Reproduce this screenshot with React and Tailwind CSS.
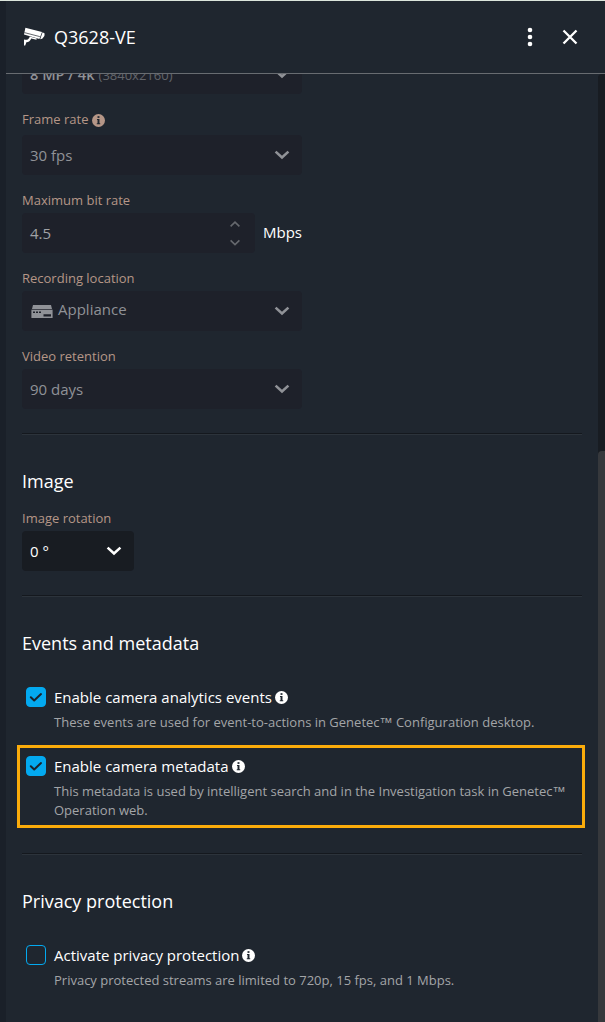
import React, { useState } from "react";

function InfoIcon({ className }) {
  return (
    <svg viewBox="0 0 12 12" className={`w-[13px] h-[13px] shrink-0 ${className}`}>
      <circle cx="6" cy="6" r="6" fill="currentColor" />
      <rect x="5.1" y="2" width="1.8" height="1.6" fill="#1f262f" />
      <path d="M4.6 4.6h2.3v4h.7v.9H4.4v-.9h.7V5.5h-.5z" fill="#1f262f" />
    </svg>
  );
}

function Chevron({ className }) {
  return (
    <svg viewBox="0 0 16 10" className={`w-4 h-2.5 shrink-0 ${className}`} fill="none">
      <path d="M1.6 1.6 8 7.4l6.4-5.8" stroke="currentColor" strokeWidth="2.6" />
    </svg>
  );
}

function CameraIcon() {
  return (
    <svg viewBox="0 0 24 20" className="w-6 h-5 shrink-0" fill="#fff">
      <path d="M3.4.8 20 5l-2.6 7-15.4-4.4z" />
      <path d="M2.4 5.6 17.8 9.6" stroke="#1f262f" strokeWidth=".7" />
      <path d="m20.6 5.2 2 1.4-.2 2.4-2.2 2.8-2 .4z" />
      <path d="M2 12.4c2.8 1 4.8.2 5.8-3l1.6.5 5.4 1.6-.4 1.2-5.2-1.3C8.400 13.600 6.800 15 4.400 15.200L3.200 18.400H2z" />
    </svg>
  );
}

function ApplianceIcon() {
  return (
    <svg viewBox="0 0 22 13" className="w-[22px] h-[13px] ml-px shrink-0">
      <path d="M2 0h18l1 3.900H1z" fill="currentColor" />
      <path d="M.4 4.700h21.200V13H.4z" fill="currentColor" />
      <path d="M2 6.400h2v1.600H2zM5 6.400h2v1.600H5zM8 6.400h2v1.600H8zM12.500 9.300h7.500v2.200h-7.500z" fill="#1e212a" />
    </svg>
  );
}

function Label({ children }) {
  return (
    <div className="flex items-center gap-1 h-[18px] mt-[17px] mb-[3px] text-[13px] text-[#b59687]">
      {children}
    </div>
  );
}

function SelectBox({ children }) {
  return (
    <div className="flex items-center justify-between w-[280px] h-10 pl-2 pr-3 rounded bg-[#1e212a] text-[15px] text-[#909297]">
      <span className="flex items-center">{children}</span>
      <Chevron className="text-[#909297]" />
    </div>
  );
}

function Divider() {
  return <div className="w-[560px] h-0.5 border-t border-t-[#14181e] border-b border-b-[#2c333b]" />;
}

function Heading({ children }) {
  return <h2 className="mt-[34px] h-6 leading-6 text-[18px] text-white">{children}</h2>;
}

function Trademark() {
  return <span className="font-['Liberation_Sans',sans-serif]">™</span>;
}

function CheckOption({ label, checked, onChange, children }) {
  return (
    <div className="flex pl-1">
      <button
        type="button"
        role="checkbox"
        aria-checked={checked}
        aria-label={label}
        onClick={onChange}
        className={`w-5 h-5 mr-2 shrink-0 rounded-[4px] border border-[#03a9f0] ${
          checked ? "bg-[#03a9f0]" : ""
        }`}
      >
        {checked && (
          <svg viewBox="0 0 18 18" className="w-[18px] h-[18px]" fill="none">
            <path
              d="m3.800 9.200 3.400 3.300 6.800-6.400"
              stroke="#1b222b"
              strokeWidth="2"
              strokeLinecap="round"
              strokeLinejoin="round"
            />
          </svg>
        )}
      </button>
      <div>
        <div className="flex items-center gap-[3px] h-5 text-[15px] text-white">
          <span>{label}</span>
          <InfoIcon className="text-white" />
        </div>
        <p className="mt-1.5 text-[13px] leading-[19px] text-[#a3a5a8]">{children}</p>
      </div>
    </div>
  );
}

export default function App() {
  const [analytics, setAnalytics] = useState(true);
  const [metadata, setMetadata] = useState(true);
  const [privacy, setPrivacy] = useState(false);

  return (
    <div className="flex w-[605px] h-[1022px] overflow-hidden bg-[#1a2029] border-t border-[#dce5dc] font-['Open_Sans',sans-serif]">
      <div className="flex flex-col w-[599px] ml-1.5 bg-[#1f262f]">
        {/* HEADER */}
        <header className="flex items-center h-[73px] shrink-0 pl-4 border-b border-[#686c71]">
          <CameraIcon />
          <h1 className="ml-2 grow text-[18px] text-white">Q3628-VE</h1>
          <svg viewBox="0 0 6 20" className="w-1.5 h-5 mr-[29px]" fill="#fff">
            <circle cx="3" cy="3" r="2.3" />
            <circle cx="3" cy="10" r="2.3" />
            <circle cx="3" cy="17" r="2.3" />
          </svg>
          <svg viewBox="0 0 16 16" className="w-4 h-4 mr-[27px]" fill="none">
            <path d="m1.5 1.5 13 13m0-13-13 13" stroke="#fff" strokeWidth="2.3" />
          </svg>
        </header>

        <div className="flex grow min-h-0 overflow-hidden">
          <main className="grow pl-4 -mt-5">
            {/* RECORDING */}
            <SelectBox>
              <span className="flex items-baseline pt-0.5">
                <span className="font-semibold text-[14.600px]">8 MP / 4k</span>
                <span className="ml-1 text-[13px] text-[#62656b]">(3840x2160)</span>
              </span>
            </SelectBox>

            <div className="pb-[3px]">
              <Label>
                Frame rate <InfoIcon className="text-[#b59687]" />
              </Label>
            </div>
            <SelectBox>30 fps</SelectBox>

            <Label>Maximum bit rate</Label>
            <div className="flex items-center">
              <div className="flex items-center justify-between w-[233px] h-10 pl-2 pr-3.5 rounded bg-[#1e212a] text-[15px] text-[#a0a2a5]">
                4.5
                <svg viewBox="0 0 12 28" className="w-3 h-7" fill="none">
                  <path
                    d="m1.6 7.4 4.4-4.2 4.4 4.2M1.6 21.4 6 25.6l4.4-4.2"
                    stroke="#66696e"
                    strokeWidth="1.6"
                  />
                </svg>
              </div>
              <span className="ml-2 pb-0.5 text-[15px] text-white">Mbps</span>
            </div>

            <Label>Recording location</Label>
            <SelectBox>
              <ApplianceIcon />
              <span className="ml-[5px] pb-1">Appliance</span>
            </SelectBox>

            <Label>Video retention</Label>
            <SelectBox>90 days</SelectBox>
            <div className="h-6" />
            <Divider />

            {/* IMAGE */}
            <Heading>Image</Heading>
            <Label>Image rotation</Label>
            <div className="flex items-center justify-between w-28 h-10 mb-6 pl-2 pr-3 rounded bg-[#181c22] text-[15px] text-white">
              0 °
              <Chevron className="text-white" />
            </div>
            <Divider />

            {/* EVENTS */}
            <Heading>Events and metadata</Heading>
            <div className="mt-8">
              <CheckOption
                label="Enable camera analytics events"
                checked={analytics}
                onChange={() => setAnalytics(!analytics)}
              >
                These events are used for event-to-actions in Genetec
                <Trademark /> Configuration desktop.
              </CheckOption>
            </div>
            <div className="w-[568px] h-[83px] mt-[13px] mb-[25px] -ml-[5px] pt-2 pl-0.5 border-3 border-[#fbac0b]">
              <CheckOption
                label="Enable camera metadata"
                checked={metadata}
                onChange={() => setMetadata(!metadata)}
              >
                This metadata is used by intelligent search and in the Investigation task in Genetec
                <Trademark />
                <br />
                Operation web.
              </CheckOption>
            </div>
            <Divider />

            {/* PRIVACY */}
            <Heading>Privacy protection</Heading>
            <div className="mt-8">
              <CheckOption
                label="Activate privacy protection"
                checked={privacy}
                onChange={() => setPrivacy(!privacy)}
              >
                Privacy protected streams are limited to 720p, 15 fps, and 1 Mbps.
              </CheckOption>
            </div>
          </main>

          {/* SCROLLBAR */}
          <div className="w-[7px] shrink-0 pt-[377px] rounded-tl bg-[#181c22]">
            <div className="h-full rounded-tl bg-[#36383c]" />
          </div>
        </div>
      </div>
    </div>
  );
}
